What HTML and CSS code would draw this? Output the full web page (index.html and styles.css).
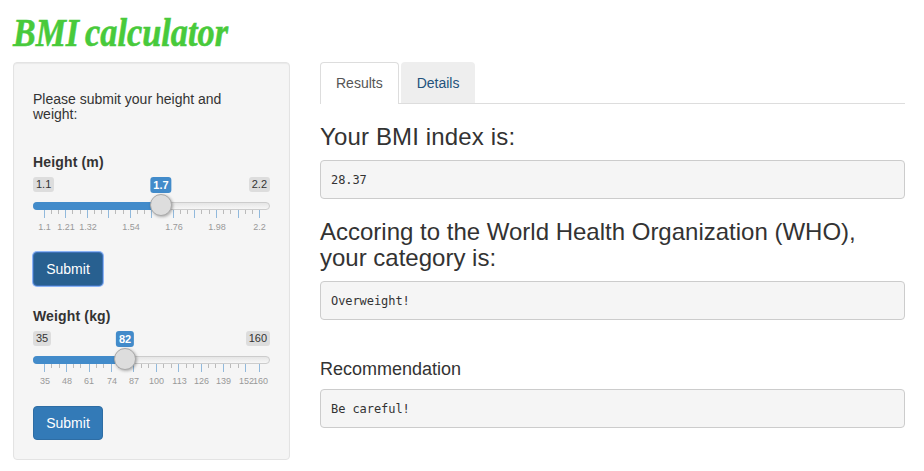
FILE: index.html
```
<!DOCTYPE html>
<html lang="en">
<head>
<meta charset="utf-8">
<title>BMI calculator</title>
<link rel="stylesheet" href="styles.css">
</head>
<body>
<h1 class="brand"><svg width="230" height="42" aria-label="BMI calculator"><text x="0" y="33" textLength="66" lengthAdjust="spacingAndGlyphs">BMI</text><text x="72" y="33" textLength="143" lengthAdjust="spacingAndGlyphs">calculator</text></svg></h1>
<div class="layout">
  <form class="sidebar">
    <p class="intro">Please submit your height and weight:</p>
    <section class="field">
      <label class="name">Height (m)</label>
      <div class="slider height">
        <div class="limits"><span>1.1</span><span>2.2</span></div>
        <div class="track"><div class="fill"></div></div>
        <b class="value">1.7</b>
        <i class="handle"></i>
        <svg class="scale" width="237" height="24">
          <path class="minor" d="M18.5 0v4M25.5 0v4M39.5 0v4M47.5 0v4M61.5 0v4M68.5 0v4M82.5 0v4M90.5 0v4M104.5 0v4M111.5 0v4M125.5 0v4M132.5 0v4M147.5 0v4M154.5 0v4M168.5 0v4M176.5 0v4M190.5 0v4M197.5 0v4M212.5 0v4M219.5 0v4"/>
          <path class="major" d="M11.5 0v8M32.5 0v8M54.5 0v8M75.5 0v8M97.5 0v8M118.5 0v8M140.5 0v8M161.5 0v8M183.5 0v8M205.5 0v8M226.5 0v8"/>
          <text x="11.5" y="20">1.1</text><text x="33" y="20">1.21</text><text x="55" y="20">1.32</text><text x="98" y="20">1.54</text><text x="141" y="20">1.76</text><text x="184" y="20">1.98</text><text x="226.5" y="20">2.2</text>
        </svg>
      </div>
      <button type="button" class="submit focused">Submit</button>
    </section>
    <section class="field">
      <label class="name">Weight (kg)</label>
      <div class="slider weight">
        <div class="limits"><span>35</span><span>160</span></div>
        <div class="track"><div class="fill"></div></div>
        <b class="value">82</b>
        <i class="handle"></i>
        <svg class="scale" width="237" height="24">
          <path class="minor" d="M18.5 0v4M26.5 0v4M40.5 0v4M47.5 0v4M63.5 0v4M70.5 0v4M85.5 0v4M92.5 0v4M108.5 0v4M115.5 0v4M130.5 0v4M138.5 0v4M153.5 0v4M160.5 0v4M175.5 0v4M182.5 0v4M197.5 0v4M205.5 0v4"/>
          <path class="major" d="M11.5 0v8M33.5 0v8M56.5 0v8M78.5 0v8M100.5 0v8M123.5 0v8M145.5 0v8M168.5 0v8M190.5 0v8M212.5 0v8M226.5 0v8"/>
          <text x="12" y="20">35</text><text x="34" y="20">48</text><text x="56" y="20">61</text><text x="79" y="20">74</text><text x="101" y="20">87</text><text x="123.5" y="20">100</text><text x="146.5" y="20">113</text><text x="168.5" y="20">126</text><text x="190.5" y="20">139</text><text x="213.5" y="20">152</text><text x="227.5" y="20">160</text>
        </svg>
      </div>
      <button type="button" class="submit">Submit</button>
    </section>
  </form>
  <main class="results">
    <nav class="tabs"><a class="tab active">Results</a><a class="tab hover">Details</a></nav>
    <h3 class="index-title">Your BMI index is:</h3>
    <pre>28.37</pre>
    <h3>Accoring to the World Health Organization (WHO), your category is:</h3>
    <pre>Overweight!</pre>
    <h4>Recommendation</h4>
    <pre>Be careful!</pre>
  </main>
</div>
</body>
</html>
```
FILE: styles.css
```
* { box-sizing: border-box; }
body {
  margin: 0;
  padding: 13px 19px 0 13px;
  font: 14px/20px "Liberation Sans", Arial, sans-serif;
  color: #333;
  background: #fff;
  overflow: hidden;
}
.brand { margin: 0; height: 49px; }
.brand svg { display: block; overflow: visible; }
.brand text {
  font: italic bold 41px "Liberation Serif", serif;
  fill: #48ca3b;
  stroke: #48ca3b;
  stroke-width: .6px;
}
.layout { display: flex; align-items: flex-start; gap: 30px; }
.sidebar {
  width: 277px;
  height: 398px;
  padding: 29px 19px 0;
  border: 1px solid #e3e3e3;
  border-radius: 4px;
  background: #f5f5f5;
  box-shadow: inset 0 1px 1px rgba(0, 0, 0, .05);
}
.intro { height: 30px; margin: 0 0 30px; padding-right: 20px; line-height: 15px; }
.field { height: 154px; }
.name { display: block; height: 25px; font-weight: bold; letter-spacing: .15px; }
.slider { position: relative; height: 75px; }
.limits {
  display: flex;
  justify-content: space-between;
  height: 25px;
  font-size: 11px;
  line-height: 15px;
}
.limits span { height: 15px; padding: 0 3px; border-radius: 3px; background: #ddd; }
.track {
  height: 8px;
  border: 1px solid #ccc;
  border-radius: 8px;
  background: linear-gradient(#ddd -50%, #fff 150%);
}
.fill { height: 8px; margin: -1px; border-radius: 8px 0 0 8px; background: #428bca; }
.height .fill { width: 128px; }
.weight .fill { width: 92px; }
.value, .handle { position: absolute; left: 128px; transform: translateX(-50%); }
.weight .value, .weight .handle { left: 92px; }
.value {
  top: 0;
  height: 16px;
  padding: 0 3px;
  border-radius: 3px;
  background: #428bca;
  color: #fff;
  font-size: 11px;
  line-height: 16px;
}
.handle {
  top: 17px;
  width: 22px;
  height: 22px;
  border: 1px solid #aaa;
  border-radius: 50%;
  background: #ddd;
  box-shadow: 1px 1px 3px rgba(0, 0, 0, .3);
}
.scale { display: block; overflow: visible; }
.scale text { font-size: 9px; text-anchor: middle; fill: #999; }
.minor { stroke: #bbb; }
.major { stroke: #91b9dc; }
.submit {
  display: block;
  width: 70px;
  height: 34px;
  padding: 0;
  border: 1px solid #2e6da4;
  border-radius: 4px;
  background: #337ab7;
  color: #fff;
  font: 14px/20px "Liberation Sans", Arial, sans-serif;
}
.focused { background: #286090; border-color: #3d70b5; box-shadow: 0 0 0 1px #8bb4f5; }
.results { width: 585px; }
.tabs { display: flex; gap: 2px; height: 42px; border-bottom: 1px solid #ddd; }
.tab { height: 41px; padding: 11px 16px; border-radius: 4px 4px 0 0; }
.active {
  height: 42px;
  padding: 10px 15px;
  border: 1px solid #ddd;
  border-bottom: 0;
  background: #fff;
  color: #555;
}
.hover { background: #eee; color: #23527c; }
h3, h4 { font-weight: 500; }
h3 { margin: 20px 0 10px; font-size: 24px; line-height: 26px; }
.index-title { letter-spacing: .15px; }
h4 { margin: 39px 0 10px; font-size: 18px; line-height: 20px; }
pre {
  height: 39px;
  margin: 0;
  padding: 10px;
  border: 1px solid #ccc;
  border-radius: 4px;
  background: #f5f5f5;
  font: 12px/19px "DejaVu Sans Mono", monospace;
  letter-spacing: -.07px;
}
```
